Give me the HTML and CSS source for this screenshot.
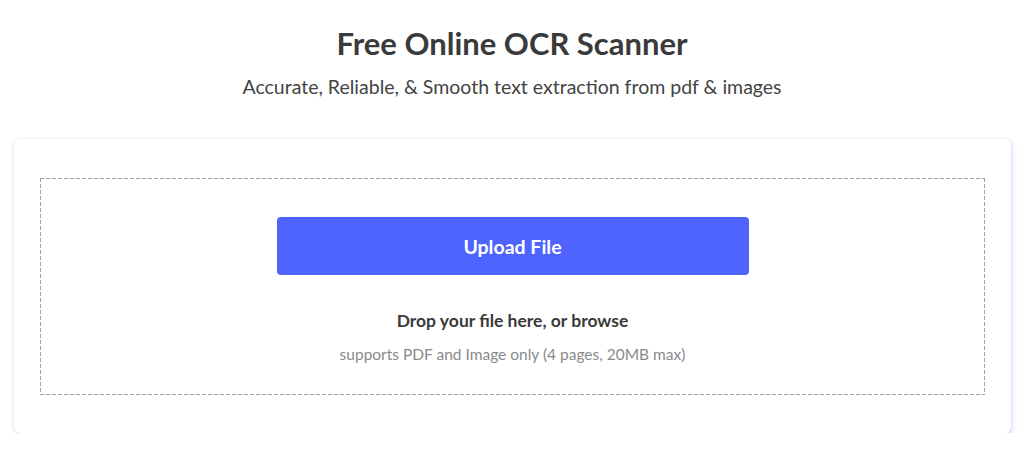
FILE: index.html
```html
<!DOCTYPE html>
<html lang="en">
<head>
    <meta charset="UTF-8">
    <meta name="viewport" content="width=device-width, initial-scale=1.0">
    <title>Free Online OCR Scanner</title>
    <link rel="stylesheet" href="styles.css">
</head>
<body>
    <header class="intro">
        <h1>Free Online OCR Scanner</h1>
        <p>Accurate, Reliable, &amp; Smooth text extraction from pdf &amp; images</p>
    </header>

    <div class="card">
        <div class="dropzone">
            <button type="button" class="upload-btn">Upload File</button>
            <p class="drop-title">Drop your file here, or browse</p>
            <p class="drop-note">supports PDF and Image only (4 pages, 20MB max)</p>
        </div>
    </div>
</body>
</html>
```

FILE: styles.css
```css
body {
    margin: 0;
    font-family: Lato, "Open Sans", sans-serif;
    background-color: #fff;
    color: #333;
}

.intro {
    text-align: center;
    padding-top: 23px;
}

.intro h1 {
    margin: 0;
    font-size: 31px;
    font-weight: 700;
    line-height: 40px;
    color: #3a3a3a;
}

.intro p {
    margin: 11px 0 0;
    font-size: 19.5px;
    line-height: 26px;
    color: #444;
}

.card {
    margin: 39px 13px 0 14px;
    padding: 39px 26px 38px;
    background-color: #fff;
    border-radius: 6px;
    box-shadow: 0 0 0 1px rgba(120, 130, 255, 0.07), 1px 2px 5px rgba(100, 110, 255, 0.25);
}

/* dashed outline drawn with gradients for longer dashes than border: dashed */
.dropzone {
    padding: 39px 20px 31px;
    text-align: center;
    background-image:
        repeating-linear-gradient(90deg, #a3a3a3 0 4px, transparent 4px 6px),
        repeating-linear-gradient(90deg, #a3a3a3 0 4px, transparent 4px 6px),
        repeating-linear-gradient(180deg, #a3a3a3 0 4px, transparent 4px 6px),
        repeating-linear-gradient(180deg, #a3a3a3 0 4px, transparent 4px 6px);
    background-size: 100% 1px, 100% 1px, 1px 100%, 1px 100%;
    background-position: 0 0, 0 100%, 0 0, 100% 0;
    background-repeat: no-repeat;
}

.upload-btn {
    display: block;
    width: 472px;
    height: 58px;
    margin: 0 auto;
    border: none;
    border-radius: 4px;
    background-color: #4f63ff;
    color: #fff;
    font-family: inherit;
    font-size: 19.5px;
    font-weight: 700;
    cursor: pointer;
}

.drop-title {
    margin: 34px 0 0;
    font-size: 17.5px;
    font-weight: 700;
    line-height: 24px;
    color: #3a3a3a;
}

.drop-note {
    margin: 11px 0 0;
    font-size: 15.5px;
    line-height: 20px;
    color: #8a8a8a;
}
```
